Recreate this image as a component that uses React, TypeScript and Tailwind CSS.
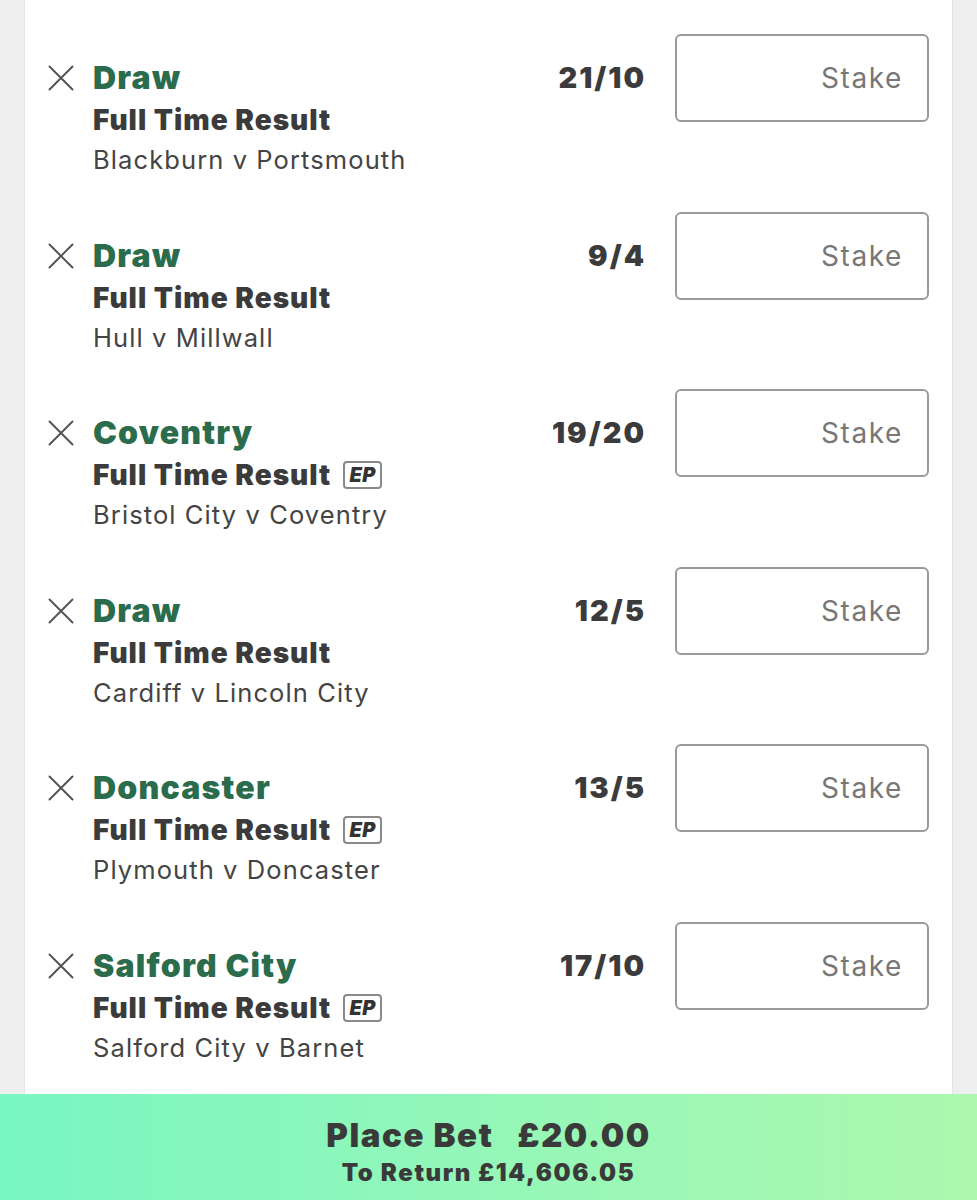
import React from 'react';

type Bet = {
    selection: string;
    odds: string;
    match: string;
    ep?: boolean;
};

const bets: Bet[] = [
    { selection: 'Draw', odds: '21/10', match: 'Blackburn v Portsmouth' },
    { selection: 'Draw', odds: '9/4', match: 'Hull v Millwall' },
    { selection: 'Coventry', odds: '19/20', match: 'Bristol City v Coventry', ep: true },
    { selection: 'Draw', odds: '12/5', match: 'Cardiff v Lincoln City' },
    { selection: 'Doncaster', odds: '13/5', match: 'Plymouth v Doncaster', ep: true },
    { selection: 'Salford City', odds: '17/10', match: 'Salford City v Barnet', ep: true },
];

function CloseIcon() {
    return (
        <svg width="26" height="26" viewBox="0 0 26 26" className="shrink-0">
            <path d="M1.5 1.5 L24.5 24.5 M24.5 1.5 L1.5 24.5" stroke="#555" strokeWidth="2" strokeLinecap="round" />
        </svg>
    );
}

function BetRow({ bet }: { bet: Bet }) {
    return (
        <div className="flex items-start h-[177.6px] shrink-0 pl-[23px] pr-[23px]">
            <div className="mt-[31px]">
                <CloseIcon />
            </div>
            <div className="flex-1 ml-[19px] mt-[23px]">
                <div className="text-[32px] leading-[42px] font-black text-[#2a6c4c] tracking-[1.2px]">
                    {bet.selection}
                </div>
                <div className="flex items-center h-[42px]">
                    <span className="text-[28px] leading-[42px] font-black text-[#3b3b3b] tracking-[1px]">
                        Full Time Result
                    </span>
                    {bet.ep && (
                        <span className="ml-[12px] w-[39px] h-[28px] border-2 border-[#8a8a8a] rounded-[4px] flex items-center justify-center text-[20px] italic font-black text-[#333] tracking-[0.5px]">
                            EP
                        </span>
                    )}
                </div>
                <div className="text-[25.5px] leading-[38px] text-[#444] tracking-[1.1px]">{bet.match}</div>
            </div>
            <div className="mt-[23px] text-[29px] leading-[42px] font-black text-[#3b3b3b] tracking-[2px] mr-[-2px]">
                {bet.odds}
            </div>
            <div className="ml-[31px] w-[254px] h-[88px] border-2 border-[#9a9a9a] rounded-[6px] flex items-center justify-end pr-[24px] text-[28px] text-[#777] tracking-[1.6px]">
                Stake
            </div>
        </div>
    );
}

export default function App() {
    return (
        <div
            className="w-[977px] h-[1200px] flex flex-col bg-[#efefef] overflow-hidden"
            style={{ fontFamily: 'Inter, "Noto Sans", sans-serif' }}
        >
            <div className="flex-1 mx-[24px] bg-white border-l border-r border-[#e4e4e4] overflow-hidden flex flex-col pt-[34px]">
                {bets.map((bet, i) => (
                    <BetRow key={i} bet={bet} />
                ))}
            </div>
            <div className="h-[106px] shrink-0 bg-gradient-to-r from-[#78f6c2] to-[#acf8ae] flex flex-col items-center justify-center text-[#3a3a3a]">
                <div className="text-[33px] leading-[40px] font-black tracking-[1.6px] mt-[12px]">
                    Place Bet<span className="ml-[24px]">£20.00</span>
                </div>
                <div className="text-[24px] leading-[36px] font-black tracking-[1.6px]">
                    To Return £14,606.05
                </div>
            </div>
        </div>
    );
}
